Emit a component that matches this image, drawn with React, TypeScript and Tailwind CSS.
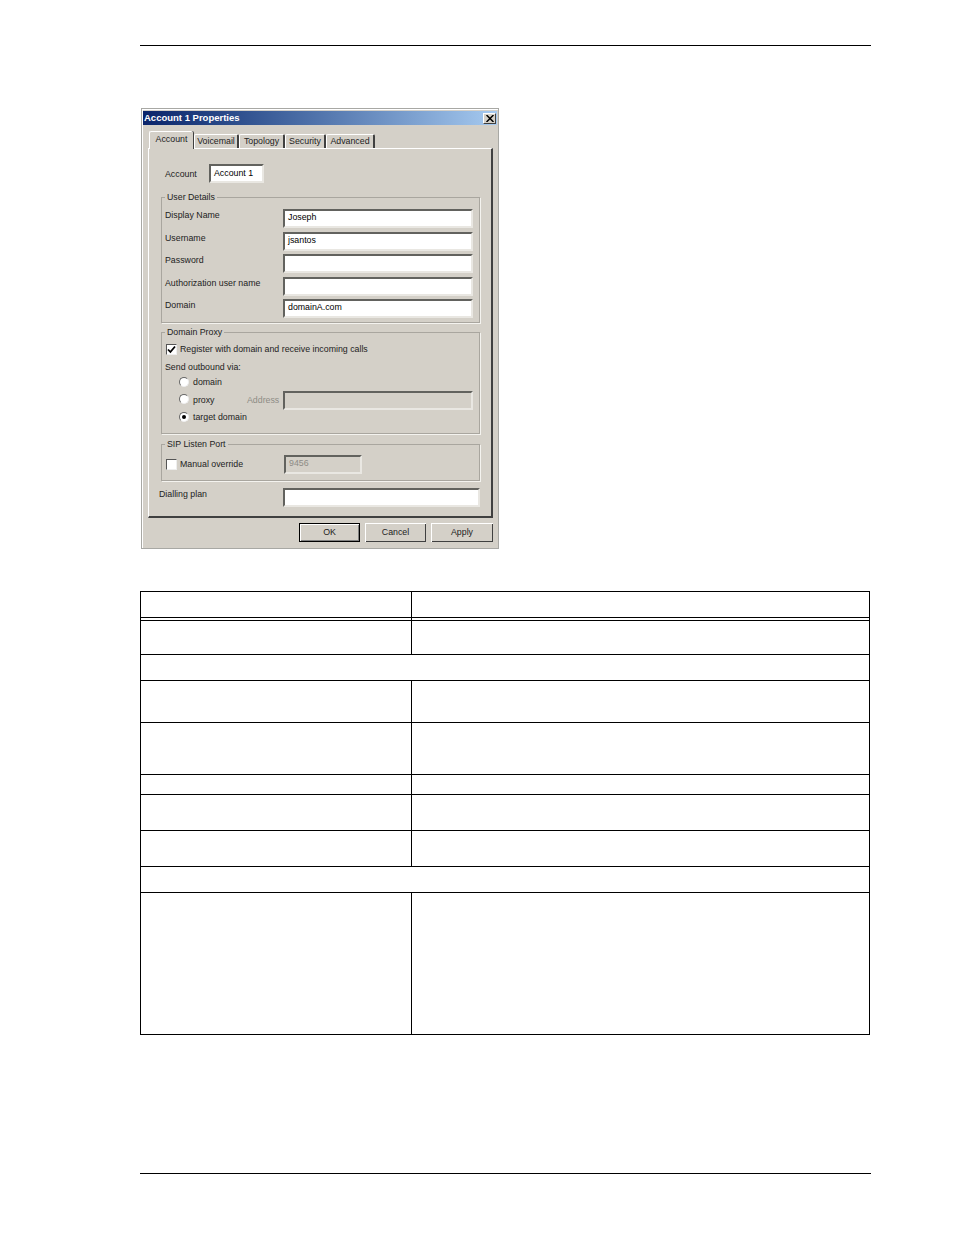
import React from "react";

const sunken = "border-2 border-t-[#62625e] border-l-[#62625e] border-r-[#e9e7e2] border-b-[#e9e7e2]";

const Input = ({ value, className = "" }: { value?: string; className?: string }) => (
  <div className={`h-[19px] bg-white text-[8.8px] leading-[12px] text-black ${sunken} ${className}`}>{value}</div>
);

const Group = ({ title, className = "", children }: { title: string; className?: string; children: React.ReactNode }) => (
  <fieldset className={`border border-[#a9a69f] shadow-[1px_1px_0_#f4f3ef] pl-[3px] pr-[6px] ${className}`}>
    <legend className="h-[11px] px-[2px] leading-[11px]">{title}</legend>
    {children}
  </fieldset>
);

const Radio = ({ checked, className = "" }: { checked?: boolean; className?: string }) => (
  <span className={`flex h-[10px] w-[10px] items-center justify-center rounded-full border border-t-[#666] border-l-[#666] border-r-[#eee] border-b-[#eee] bg-white ${className}`}>
    {checked && <span className="h-[4px] w-[4px] rounded-full bg-black" />}
  </span>
);

const Check = ({ checked }: { checked?: boolean }) => (
  <span className="flex h-[11px] w-[11px] items-center justify-center border border-t-[#555] border-l-[#555] border-r-[#eee] border-b-[#eee] bg-white">
    {checked && (
      <svg width="9" height="9" viewBox="0 0 9 9">
        <path d="M1 4.5 L3.4 7 L8 1.5" fill="none" stroke="#000" strokeWidth="1.8" />
      </svg>
    )}
  </span>
);

const tabs = [
  { name: "Voicemail", w: "w-[45px]" },
  { name: "Topology", w: "w-[46px]" },
  { name: "Security", w: "w-[41px]" },
  { name: "Advanced", w: "w-[49px]" },
];

const details = [
  { label: "Display Name", value: "Joseph" },
  { label: "Username", value: "jsantos" },
  { label: "Password", value: "" },
  { label: "Authorization user name", value: "" },
  { label: "Domain", value: "domainA.com" },
];

const Dialog = () => (
  <div className="ml-[141px] mt-[62px] h-[441px] w-[358px] border border-[#a8a8a4] bg-[#d4d0c8] p-[1px] text-[8.8px] text-[#222] [font-family:'Liberation_Sans',Arial,sans-serif] shadow-[inset_1px_1px_0_#fff]">
    <div className="mt-[1px] flex h-[14px] items-center justify-between bg-gradient-to-r from-[#0a246a] to-[#a6caf0] px-[1px]">
      <span className="text-[9.5px] font-bold text-white">Account 1 Properties</span>
      <span className="flex h-[11px] w-[13px] items-center justify-center border border-t-white border-l-white border-r-[#404040] border-b-[#404040] bg-[#d4d0c8]">
        <svg width="8" height="7" viewBox="0 0 8 7">
          <path d="M0.5 0 L7.5 7 M7.5 0 L0.5 7" stroke="#000" strokeWidth="1.5" />
        </svg>
      </span>
    </div>

    <div className="ml-[6px] mt-[6px] flex h-[17px] items-end">
      <div className="relative z-10 -mb-[1px] flex h-[18px] w-[44px] items-start justify-center rounded-t-[2px] border-t border-l border-t-white border-l-white bg-[#d4d0c8] pt-[1px] shadow-[1px_0_0_#404040]">
        Account
      </div>
      <div className="ml-[1px] flex">
        {tabs.map((t) => (
          <div
            key={t.name}
            className={`flex h-[14px] ${t.w} items-center justify-center rounded-t-[2px] border-t border-l border-r-2 border-t-white border-l-white border-r-[#404040]`}
          >
            {t.name}
          </div>
        ))}
      </div>
    </div>

    <div className="ml-[5px] h-[370px] w-[345px] border-t border-l border-r-2 border-b-2 border-t-white border-l-white border-r-[#404040] border-b-[#404040] pl-[12px] pr-[11px] pt-[15px]">
      <div className="flex h-[19px] items-center pl-[4px]">
        <span className="w-[44px] pt-[2px]">Account</span>
        <Input value="Account 1" className="w-[55px] pl-[3px] pt-[1px]" />
      </div>

      <Group title="User Details" className="mt-[9px] h-[131px]">
        <div className="flex flex-col gap-[3.5px] pt-[6px]">
          {details.map((d) => (
            <div key={d.label} className="flex h-[19px]">
              <span className="mt-[-1px] w-[118px] leading-[14px]">{d.label}</span>
              <Input value={d.value} className="w-[190px] pl-[3px]" />
            </div>
          ))}
        </div>
      </Group>

      <Group title="Domain Proxy" className="mt-[4px] h-[107px]">
        <div className="mt-[4px] flex h-[14px] items-center gap-[3px] pl-[1px]">
          <Check checked />
          <span className="pt-[2px]">Register with domain and receive incoming calls</span>
        </div>
        <div className="mt-[4px] flex h-[14px] items-center pt-[2px]">Send outbound via:</div>
        <div className="mt-[1px] flex h-[14px] items-center gap-[4px] pl-[14px]">
          <Radio />
          <span className="pt-[2px]">domain</span>
        </div>
        <div className="mt-[2px] flex h-[19px] items-center pl-[14px]">
          <Radio className="mb-[3px]" />
          <span className="ml-[4px] w-[54px]">proxy</span>
          <span className="w-[36px] text-[#8e8c86]">Address</span>
          <div className={`h-[19px] w-[190px] ${sunken}`} />
        </div>
        <div className="flex h-[14px] items-center gap-[4px] pl-[14px]">
          <Radio checked />
          <span className="pt-[2px]">target domain</span>
        </div>
      </Group>

      <Group title="SIP Listen Port" className="mt-[5px] h-[42px]">
        <div className="mt-[5px] flex h-[19px] items-center pl-[1px]">
          <Check />
          <span className="ml-[3px] w-[104px]">Manual override</span>
          <div className={`h-[19px] w-[78px] pl-[3px] leading-[12px] text-[#8e8c86] ${sunken}`}>9456</div>
        </div>
      </Group>

      <div className="-ml-[2px] mt-[7px] flex h-[19px]">
        <span className="mt-[-1px] w-[124px] leading-[14px]">Dialling plan</span>
        <Input className="w-[197px] shrink-0" />
      </div>
    </div>

    <div className="ml-[5px] mt-[5px] flex w-[345px] justify-end gap-[5px]">
      <div className="flex h-[19px] w-[61px] items-center justify-center border border-black bg-[#d4d0c8] shadow-[inset_1px_1px_0_#fff,inset_-1px_-1px_0_#808080]">OK</div>
      <div className="flex h-[19px] w-[61px] items-center justify-center bg-[#d4d0c8] shadow-[inset_1px_1px_0_#fff,inset_-1px_-1px_0_#404040]">Cancel</div>
      <div className="flex h-[19px] w-[62px] items-center justify-center bg-[#d4d0c8] shadow-[inset_1px_1px_0_#fff,inset_-1px_-1px_0_#404040]">Apply</div>
    </div>
  </div>
);

const rows: { h: string; span?: boolean }[] = [
  { h: "h-[26px]" },
  { h: "h-[3px]" },
  { h: "h-[34px]" },
  { h: "h-[26px]", span: true },
  { h: "h-[42px]" },
  { h: "h-[52px]" },
  { h: "h-[20px]" },
  { h: "h-[36px]" },
  { h: "h-[36px]" },
  { h: "h-[26px]", span: true },
  { h: "h-[142px]" },
];

const App = () => (
  <div className="h-[1235px] w-[954px] overflow-hidden bg-white pt-[45px]">
    <div className="ml-[140px] h-[1px] w-[731px] bg-black" />
    <Dialog />
    <div className="ml-[140px] mt-[42px] w-[730px] border-t border-l border-r border-black">
      {rows.map((r, i) => (
        <div key={i} className={`flex ${r.h} border-b border-black`}>
          {!r.span && <div className="w-[271px] border-r border-black" />}
        </div>
      ))}
    </div>
    <div className="ml-[140px] mt-[138px] h-[1px] w-[731px] bg-black" />
  </div>
);

export default App;
